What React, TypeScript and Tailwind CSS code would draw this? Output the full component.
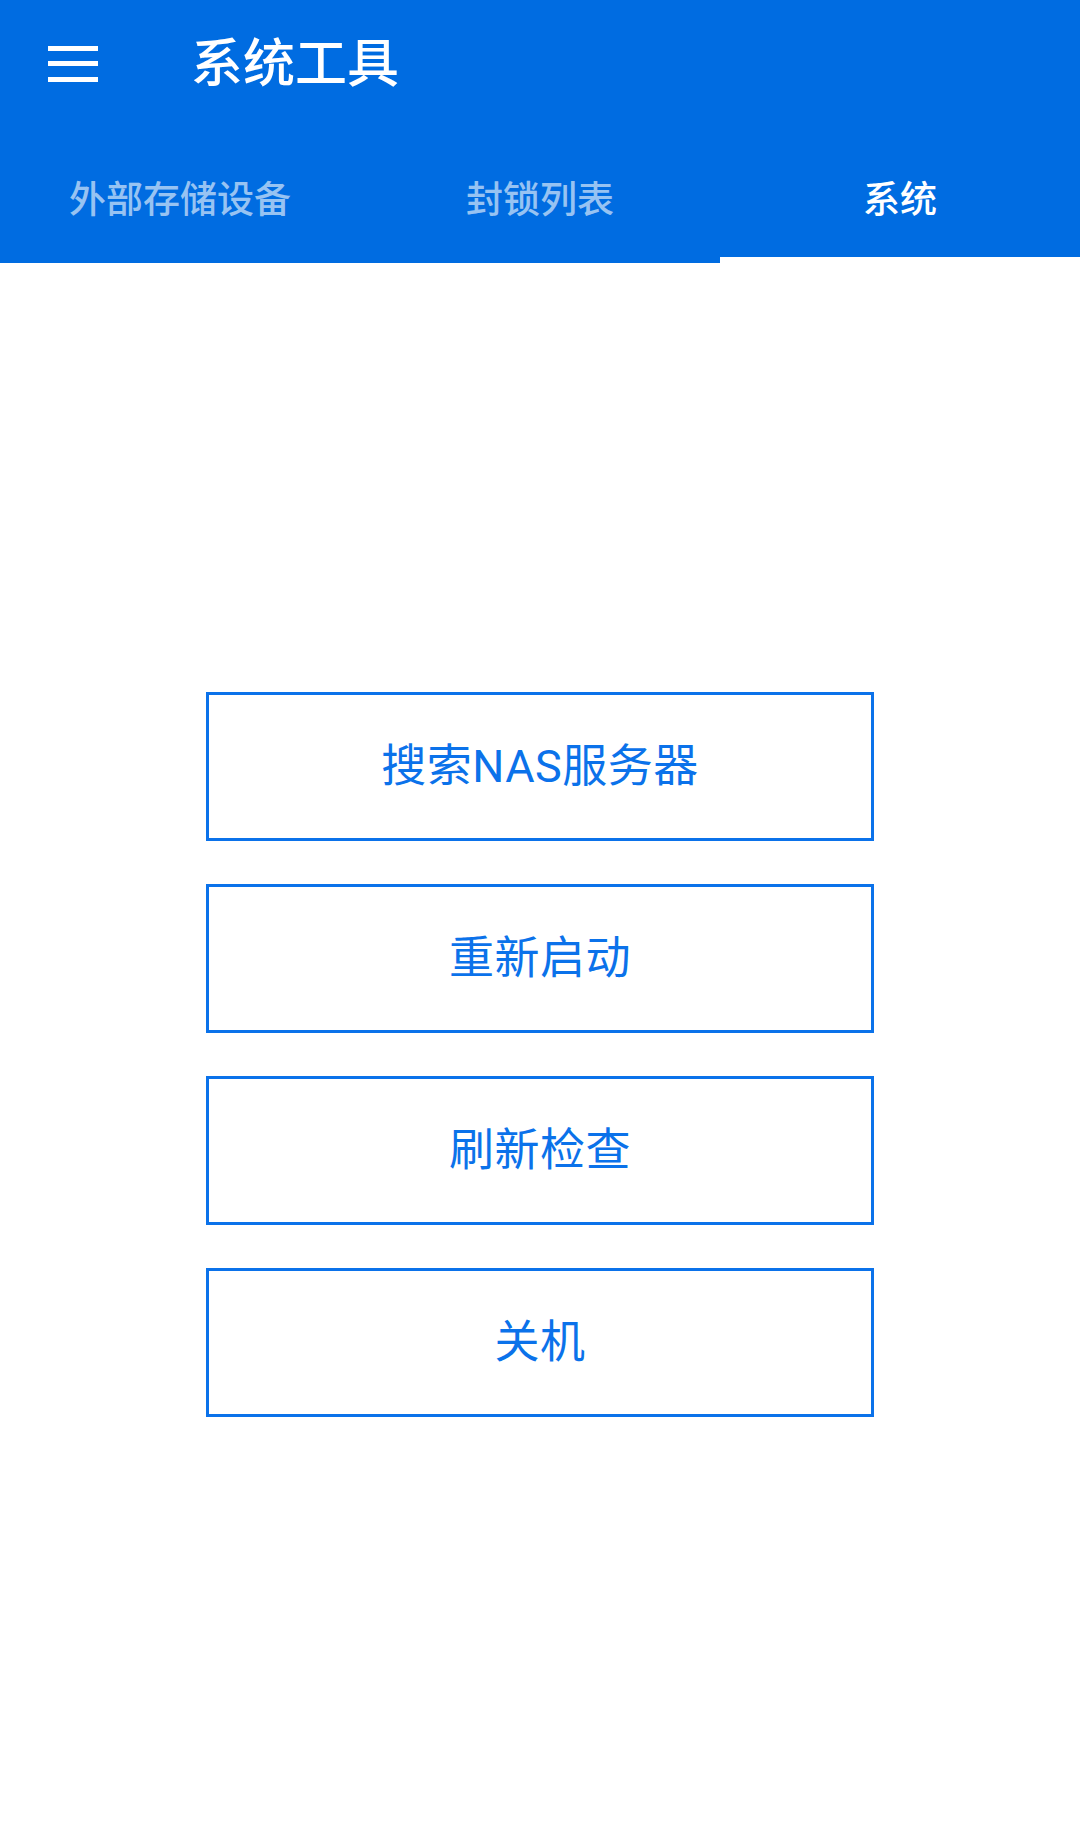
import { useState } from "react";

const tabs = ["外部存储设备", "封锁列表", "系统"];
const actions = ["搜索NAS服务器", "重新启动", "刷新检查", "关机"];

const App = () => {
    const [active, setActive] = useState(2);

    return (
        <div className="flex min-h-[1846px] w-[1080px] flex-col bg-white font-['Roboto','Noto_Sans_CJK_SC',sans-serif]">
            {/* app bar */}
            <header className="bg-[#006ce1]">
                <div className="flex h-[127px] items-center">
                    <button className="ml-[48px] flex w-[50px] flex-col gap-[10.5px]">
                        <span className="block h-[5px] w-full bg-white" />
                        <span className="block h-[5px] w-full bg-white" />
                        <span className="block h-[5px] w-full bg-white" />
                    </button>
                    <h1 className="ml-[93px] mt-[2px] text-[52px] font-medium leading-none text-white">系统工具</h1>
                </div>

                {/* tabs */}
                <nav className="grid h-[136px] grid-cols-3">
                    {tabs.map((tab, i) => (
                        <button key={tab} onClick={() => setActive(i)} className="flex flex-col">
                            <span
                                className={`flex flex-1 items-center justify-center pt-[16px] text-[37px] font-medium leading-none ${
                                    i === active ? "text-white" : "text-white/60"
                                }`}
                            >
                                {tab}
                            </span>
                            <span className={`block h-[6px] w-full ${i === active ? "bg-white" : "bg-transparent"}`} />
                        </button>
                    ))}
                </nav>
            </header>

            {/* actions */}
            <main className="flex flex-1 flex-col items-center justify-center gap-[43px]">
                {actions.map((label) => (
                    <button
                        key={label}
                        className="flex h-[149px] w-[668px] items-center justify-center border-[3px] border-[#0b72ea] text-[45px] leading-none tracking-[0.5px] text-[#0b72ea]"
                    >
                        {label}
                    </button>
                ))}
            </main>
        </div>
    );
};

export default App;
